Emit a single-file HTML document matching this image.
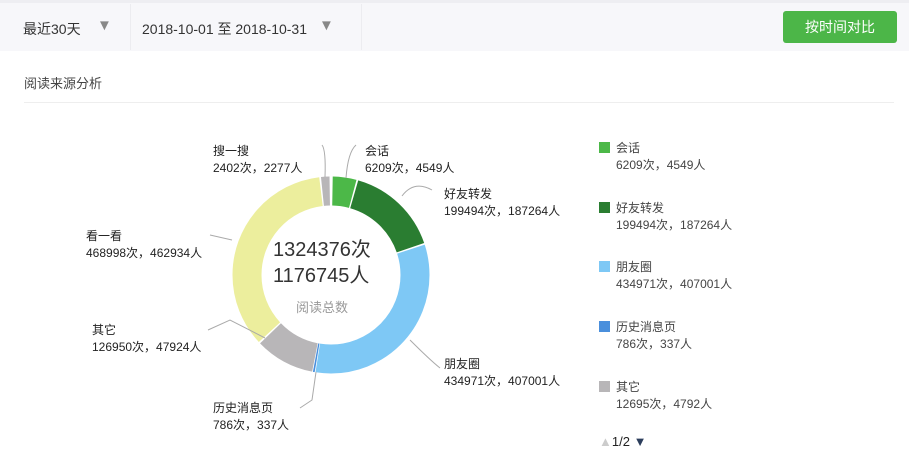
<!DOCTYPE html><html><head><meta charset="utf-8"><style>
body{margin:0;width:909px;height:475px;background:#fff;font-family:"Liberation Sans","Noto Sans CJK SC",sans-serif;color:#333;position:relative;overflow:hidden}
.a{position:absolute;white-space:nowrap}
.t{font-size:12px;line-height:17px;color:#222}
.lg{font-size:12px;line-height:17px;color:#444}
.sq{position:absolute;width:11px;height:11px}
</style></head><body>
<div class="a" style="left:0;top:0;width:909px;height:3px;background:#eeeef2"></div>
<div class="a" style="left:0;top:3px;width:909px;height:48px;background:#f7f7fa"></div>
<div class="a" style="left:130px;top:4px;width:1px;height:46px;background:#ececf0"></div>
<div class="a" style="left:361px;top:4px;width:1px;height:46px;background:#ececf0"></div>
<div class="a" style="left:23px;top:19px;font-size:14px;color:#333">最近30天</div>
<div class="a" style="left:97px;top:17px;font-size:15px;color:#888">▼</div>
<div class="a" style="left:142px;top:19px;font-size:14px;color:#333">2018-10-01 至 2018-10-31</div>
<div class="a" style="left:319px;top:17px;font-size:15px;color:#888">▼</div>
<div class="a" style="left:783px;top:11px;width:114px;height:32px;background:#4cb648;border-radius:3px;color:#fff;font-size:14px;line-height:32px;text-align:center">按时间对比</div>
<div class="a" style="left:24px;top:73px;font-size:13px;color:#444">阅读来源分析</div>
<div class="a" style="left:24px;top:102px;width:870px;height:1px;background:#eee"></div>
<svg class="a" style="left:0;top:0" width="909" height="475">
<g fill="none" stroke-width="29" transform="rotate(-90 331 275)">
<circle cx="331" cy="275" r="84" stroke="#4cb848" stroke-dasharray="20.5 600" stroke-dashoffset="-1.5"/>
<circle cx="331" cy="275" r="84" stroke="#2a7d31" stroke-dasharray="80.6 600" stroke-dashoffset="-23.5"/>
<circle cx="331" cy="275" r="84" stroke="#7ec8f5" stroke-dasharray="171.5 600" stroke-dashoffset="-105.6"/>
<circle cx="331" cy="275" r="84" stroke="#4a8fdc" stroke-dasharray="1.5 600" stroke-dashoffset="-277.8"/>
<circle cx="331" cy="275" r="84" stroke="#b8b6b8" stroke-dasharray="51.3 600" stroke-dashoffset="-280"/>
<circle cx="331" cy="275" r="84" stroke="#ecee9d" stroke-dasharray="184.7 600" stroke-dashoffset="-332.8"/>
<circle cx="331" cy="275" r="84" stroke="#b8b6b8" stroke-dasharray="7.3 600" stroke-dashoffset="-519"/>
</g>
<g fill="none" stroke="#aaa" stroke-width="1">
<path d="M346 178 Q348 152 356 145"/>
<path d="M402 196 Q414 180 432 190"/>
<path d="M325 177 Q326 150 322 145"/>
<path d="M232 240 L210 235"/>
<path d="M265 338 L230 320 L208 330"/>
<path d="M316 372 L312 400 L300 408"/>
<path d="M410 340 Q430 360 440 368"/>
</g>
</svg>
<div class="a t" style="left:365px;top:143px">会话<br>6209次，4549人</div>
<div class="a t" style="left:444px;top:186px">好友转发<br>199494次，187264人</div>
<div class="a t" style="left:213px;top:143px">搜一搜<br>2402次，2277人</div>
<div class="a t" style="left:86px;top:228px">看一看<br>468998次，462934人</div>
<div class="a t" style="left:92px;top:322px">其它<br>126950次，47924人</div>
<div class="a t" style="left:213px;top:400px">历史消息页<br>786次，337人</div>
<div class="a t" style="left:444px;top:356px">朋友圈<br>434971次，407001人</div>
<div class="a" style="left:273px;top:237px;font-size:20px;line-height:26px;color:#333">1324376次<br>1176745人</div>
<div class="a" style="left:296px;top:297px;font-size:13px;color:#999">阅读总数</div>
<div class="sq" style="left:599px;top:142px;background:#4cb848"></div>
<div class="a lg" style="left:616px;top:140px">会话<br>6209次，4549人</div>
<div class="sq" style="left:599px;top:202px;background:#2a7d31"></div>
<div class="a lg" style="left:616px;top:200px">好友转发<br>199494次，187264人</div>
<div class="sq" style="left:599px;top:261px;background:#7ec8f5"></div>
<div class="a lg" style="left:616px;top:259px">朋友圈<br>434971次，407001人</div>
<div class="sq" style="left:599px;top:321px;background:#4a8fdc"></div>
<div class="a lg" style="left:616px;top:319px">历史消息页<br>786次，337人</div>
<div class="sq" style="left:599px;top:381px;background:#b8b6b8"></div>
<div class="a lg" style="left:616px;top:379px">其它<br>12695次，4792人</div>
<div class="a" style="left:599px;top:434px;font-size:13px;color:#222"><span style="color:#ccc">▲</span>1/2 <span style="color:#2c3e5c">▼</span></div>
</body></html>
